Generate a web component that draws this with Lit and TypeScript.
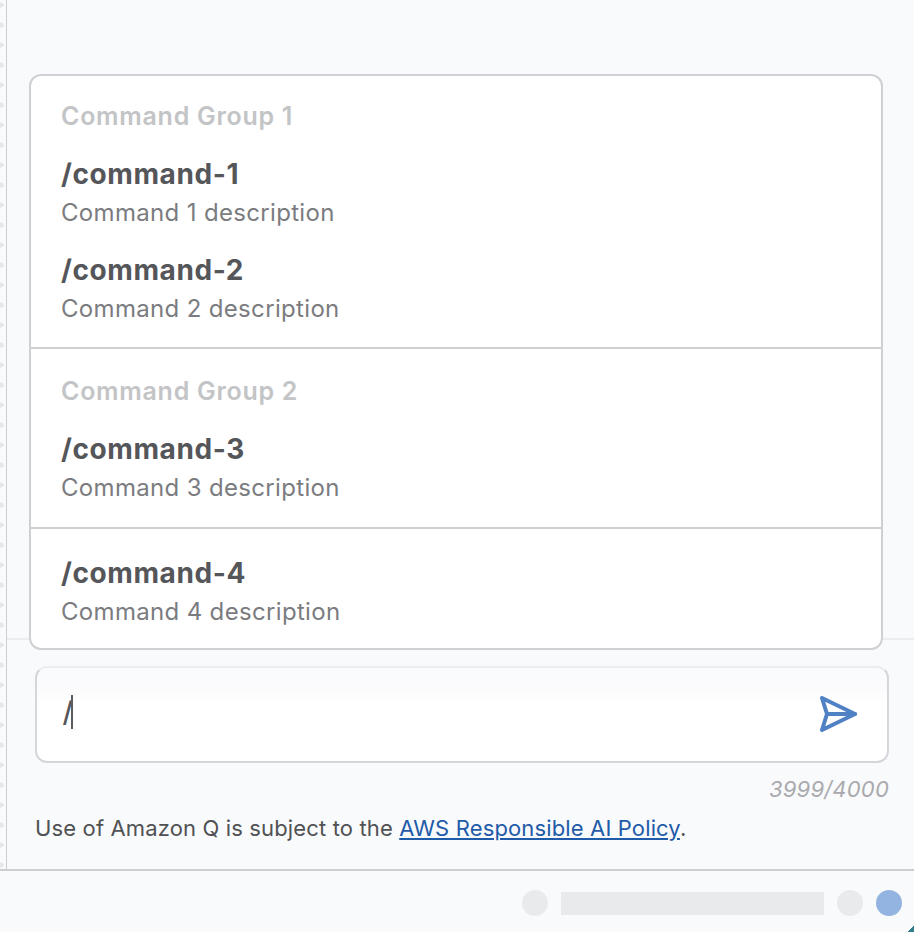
import { LitElement, html, css } from "lit";
import { customElement } from "lit/decorators.js";

const groups = [
  { title: "Command Group 1", items: [["/command-1", "Command 1 description"], ["/command-2", "Command 2 description"]] },
  { title: "Command Group 2", items: [["/command-3", "Command 3 description"]] },
  { title: "", items: [["/command-4", "Command 4 description"]] },
];

@customElement("app-root")
export class AppRoot extends LitElement {
  static styles = css`
    :host {
      display: block;
      position: relative;
      width: 914px;
      height: 932px;
      overflow: hidden;
      background: #f9fafc;
      font-family: Inter, "Noto Sans", sans-serif;
      color: #55565a;
      -webkit-font-smoothing: antialiased;
    }
    .main { display: flex; height: 871px; border-bottom: 2px solid #cdced1; box-sizing: border-box; }
    .strip {
      width: 5.5px; flex: none;
      background-image: radial-gradient(circle at 1px 5px, #e6e7ea 2.2px, transparent 2.8px);
      background-size: 5.5px 20px;
    }
    .panel { flex: 1; min-width: 0; border-left: 1.5px solid #cdced1; display: flex; flex-direction: column; }
    .card {
      position: relative; z-index: 1;
      margin: 74px 31.5px 0 22px;
      height: 576px; box-sizing: border-box;
      background: #fff;
      border: 2px solid #cfd0d3;
      border-radius: 12px;
    }
    .group { border-bottom: 2px solid #cfd0d3; box-sizing: border-box; padding: 0 0 0 30.5px; }
    .group:last-child { border-bottom: 0; }
    .g1 { height: 273px; padding-top: 25px; }
    .g2 { height: 180px; padding-top: 27px; }
    .g3 { padding-top: 26px; }
    .title { font-size: 25px; line-height: 30px; font-weight: 600; letter-spacing: 0.72px; color: #c3c4c6; margin-bottom: 25px; }
    .item { margin-bottom: 23px; }
    .cmd { font-size: 28px; line-height: 36px; font-weight: 700; letter-spacing: 0.6px; color: #55565a; }
    .desc { font-size: 24px; line-height: 32px; letter-spacing: 0.33px; color: #7b7c7f; margin-top: 5px; }
    .foot { margin-top: -12px; border-top: 2px solid #ecedf0; flex: 1; padding: 26px 25px 0 28.5px; }
    .input {
      height: 97px; box-sizing: border-box;
      background: linear-gradient(#fafbfd 0, #fbfbfd 20px, #fff 34px);
      border: 2px solid #d5d6d9; border-top-color: #ecedf0;
      border-radius: 12px;
      display: flex; align-items: center; justify-content: space-between;
      padding: 0 30px 0 25.5px;
    }
    .val { display: flex; align-items: center; font-size: 28px; font-weight: 500; line-height: 34px; color: #55565a; margin-top: -6px; }
    .caret { width: 2px; height: 34px; background: #5b5c60; margin-left: -2px; }
    .send { width: 38px; height: 38px; display: block; margin-top: -2px; }
    .count { text-align: right; font-size: 22px; line-height: 28px; letter-spacing: 0.2px; font-style: italic; color: #a9aaad; margin-top: 12px; }
    .legal { font-size: 22px; line-height: 28px; letter-spacing: 0.14px; color: #505154; margin-top: 11px; }
    .legal a { color: #1f5ba8; text-decoration: underline; }
    .status { display: flex; align-items: center; justify-content: flex-end; gap: 13px; height: 61px; padding: 3px 12px 0 0; box-sizing: border-box; }
    .dot { width: 26px; height: 26px; border-radius: 50%; background: #e9eaec; }
    .dot.on { background: #93b3e0; }
    .bar { width: 263px; height: 23px; background: #e9eaec; }
    .corner { position: absolute; right: 0; bottom: 0; width: 6px; height: 6px; background: linear-gradient(135deg, transparent 50%, #2f7d8c 50%); }
  `;

  render() {
    const cls = ["g1", "g2", "g3"];
    return html`
      <div class="main">
        <div class="strip"></div>
        <div class="panel">
          <div class="card">
            ${groups.map((g, i) => html`
              <div class="group ${cls[i]}">
                ${g.title ? html`<div class="title">${g.title}</div>` : ""}
                ${g.items.map(([c, d]) => html`<div class="item"><div class="cmd">${c}</div><div class="desc">${d}</div></div>`)}
              </div>`)}
          </div>
          <div class="foot">
            <div class="input">
              <div class="val">/<span class="caret"></span></div>
              <svg class="send" viewBox="0 0 38 38" fill="none" stroke="#4f81c4" stroke-width="4" stroke-linejoin="round" stroke-linecap="round">
                <path d="M3 3 L36 19 L3 35 L8 19 Z" />
                <path d="M8 19 H36" />
              </svg>
            </div>
            <div class="count">3999/4000</div>
            <div class="legal">Use of Amazon Q is subject to the <a href="#">AWS Responsible AI Policy</a>.</div>
          </div>
        </div>
      </div>
      <div class="status">
        <div class="dot"></div>
        <div class="bar"></div>
        <div class="dot"></div>
        <div class="dot on"></div>
      </div>
      <div class="corner"></div>
    `;
  }
}
